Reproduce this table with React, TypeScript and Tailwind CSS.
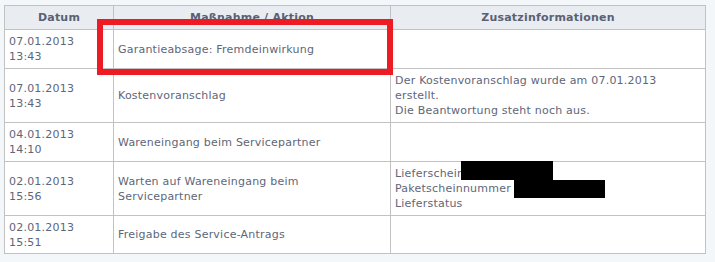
import React from "react";

type Row = {
  date: string;
  time: string;
  action: React.ReactNode;
  info: React.ReactNode;
};

const rows: Row[] = [
  {
    date: "07.01.2013",
    time: "13:43",
    action: "Garantieabsage: Fremdeinwirkung",
    info: null,
  },
  {
    date: "07.01.2013",
    time: "13:43",
    action: "Kostenvoranschlag",
    info: (
      <>
        Der Kostenvoranschlag wurde am 07.01.2013
        <br />
        erstellt.
        <br />
        Die Beantwortung steht noch aus.
      </>
    ),
  },
  {
    date: "04.01.2013",
    time: "14:10",
    action: "Wareneingang beim Servicepartner",
    info: null,
  },
  {
    date: "02.01.2013",
    time: "15:56",
    action: (
      <>
        Warten auf Wareneingang beim
        <br />
        Servicepartner
      </>
    ),
    info: (
      <>
        Lieferschein
        <br />
        Paketscheinnummer
        <br />
        Lieferstatus
      </>
    ),
  },
  {
    date: "02.01.2013",
    time: "15:51",
    action: "Freigabe des Service-Antrags",
    info: null,
  },
];

const heights = ["h-[39px]", "h-[54px]", "h-[39px]", "h-[54px]", "h-[38px]"];

export default function App() {
  return (
    <div
      className="w-[715px] h-[262px] bg-[#f3f7fa] pt-[5px] pl-[4px] overflow-hidden"
      style={{ fontFamily: '"DejaVu Sans", Verdana, sans-serif' }}
    >
      <div className="relative w-[702px]">
        <table className="w-[702px] table-fixed border-collapse bg-white text-[11px] leading-[15px] tracking-[0.22px] text-[#5e6679]">
          <colgroup>
            <col className="w-[109px]" />
            <col className="w-[277px]" />
            <col />
          </colgroup>
          <thead>
            <tr className="h-[24px] bg-[#e9edf1]">
              <th className="border border-[#c2c2c2] text-center font-bold text-[#5a6174] p-0">Datum</th>
              <th className="border border-[#c2c2c2] text-center font-bold text-[#5a6174] p-0">Maßnahme / Aktion</th>
              <th className="border border-[#c2c2c2] text-center font-bold text-[#5a6174] p-0">Zusatzinformationen</th>
            </tr>
          </thead>
          <tbody>
            {rows.map((r, i) => (
              <tr key={i} className={heights[i]}>
                <td className="border border-[#c2c2c2] px-[4px] py-0 align-middle">
                  {r.date}
                  <br />
                  {r.time}
                </td>
                <td className="border border-[#c2c2c2] px-[4px] py-0 align-middle">{r.action}</td>
                <td className="border border-[#c2c2c2] px-[4px] py-0 align-middle">{r.info}</td>
              </tr>
            ))}
          </tbody>
        </table>

        {/* highlight frame around the first action */}
        <div className="absolute left-[93px] top-[14px] w-[296px] h-[56px] border-[6px] border-[#ed1c24]" />

        {/* redacted numbers */}
        <div className="absolute left-[457px] top-[156px] w-[92px] h-[19px] bg-black" />
        <div className="absolute left-[510px] top-[175px] w-[91px] h-[18px] bg-black" />
      </div>
    </div>
  );
}
